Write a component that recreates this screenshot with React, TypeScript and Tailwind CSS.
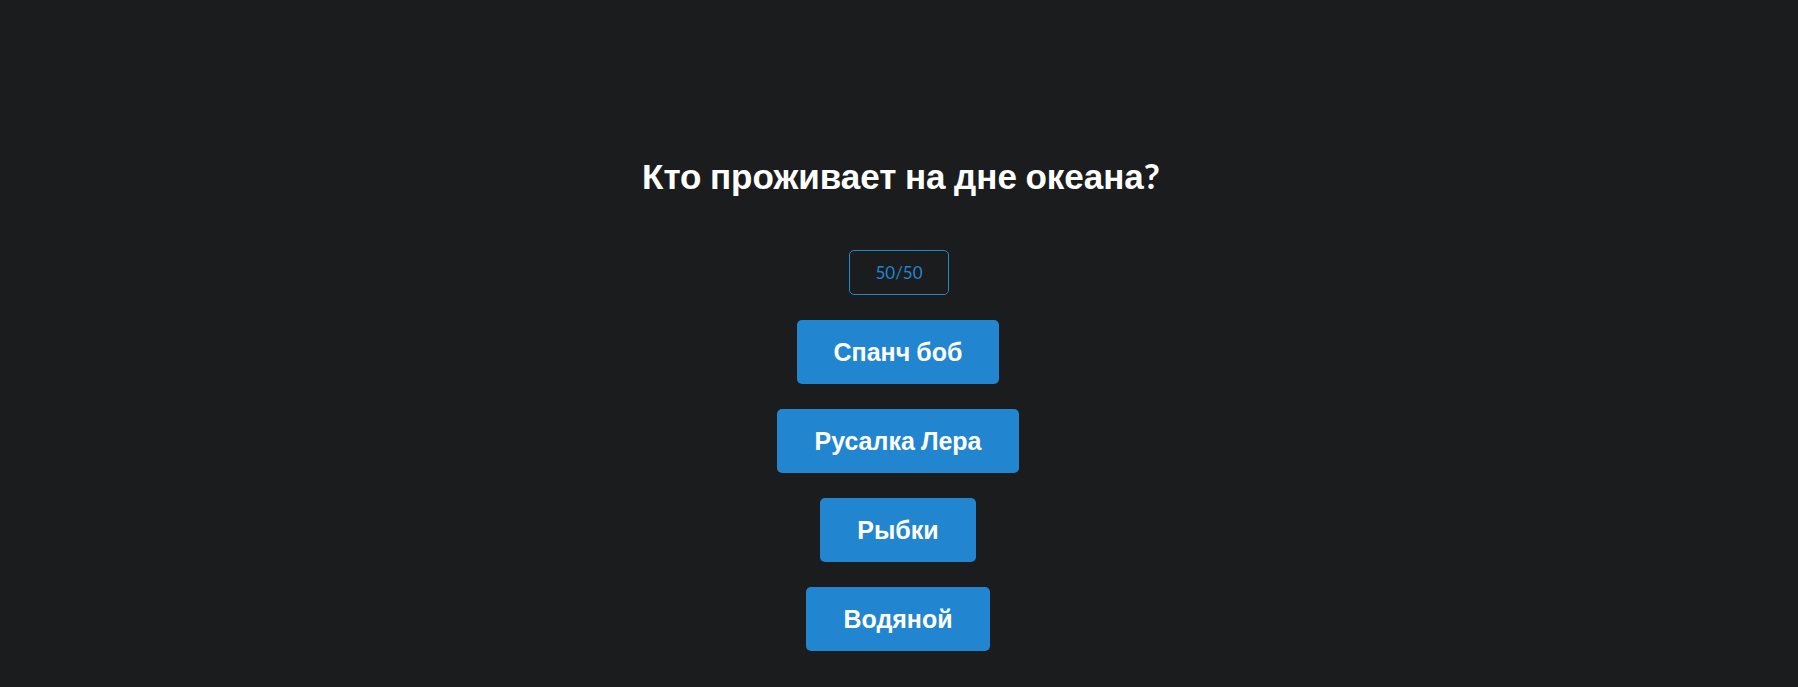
const answers = ["Спанч боб", "Русалка Лера", "Рыбки", "Водяной"];

// Cyrillic words are set in the sans fallback; spaces and punctuation stay in Lato.
function MixedText({ text }: { text: string }) {
  return (
    <>
      {text.split(/([\s?]+)/).map((part, index) =>
        index % 2 === 1 ? (
          <span key={index} className="font-['Lato','Liberation_Sans',sans-serif] leading-[0]">
            {part}
          </span>
        ) : (
          part
        ),
      )}
    </>
  );
}

export default function App() {
  return (
    <main className="flex min-h-screen flex-col items-center bg-[#1b1c1d] pt-[148px] pb-[35px] font-['Liberation_Sans',Arial,sans-serif]">
      <h1 className="mb-11 pl-1 text-center text-[35px] leading-[58px] font-bold text-white">
        <MixedText text="Кто проживает на дне океана?" />
      </h1>
      <button
        type="button"
        className="rounded-[5px] border border-[#2185d0] px-[25px] py-[11px] font-['Lato','Liberation_Sans',sans-serif] text-[17px] leading-[21px] text-[#2185d0]"
      >
        50/50
      </button>
      <div className="mt-[25px] flex flex-col items-center gap-[25px] pr-[2px]">
        {answers.map((answer) => (
          <button
            key={answer}
            type="button"
            className="rounded-[5px] bg-[#2185d0] px-[37px] py-5 text-[25px] leading-6 font-bold text-white"
          >
            <MixedText text={answer} />
          </button>
        ))}
      </div>
    </main>
  );
}
